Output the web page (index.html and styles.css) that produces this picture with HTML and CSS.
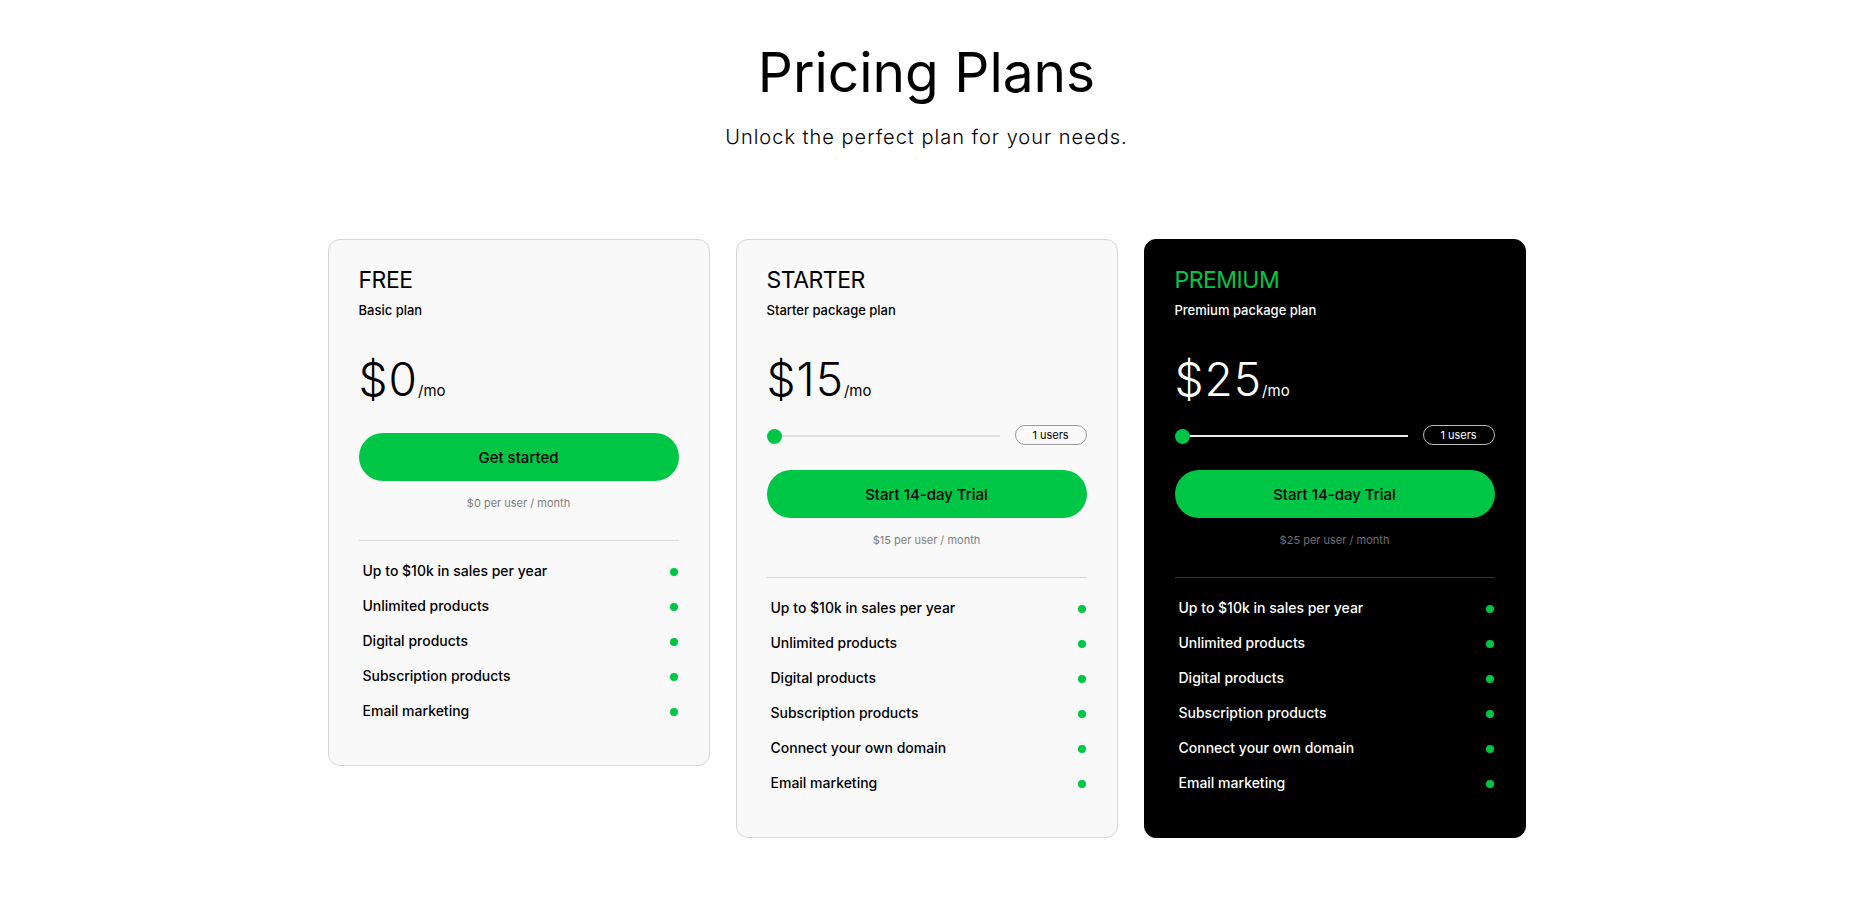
FILE: index.html
```html
<!DOCTYPE html>
<html lang="en">
<head>
<meta charset="utf-8">
<title>Pricing Plans</title>
<link rel="stylesheet" href="styles.css">
</head>
<body>
<main class="page">
  <header class="hero">
    <h1 class="hero-title">Pricing Plans</h1>
    <p class="hero-sub">Unlock the perfect plan for your needs.</p>
  </header>

  <section class="cards">
    <article class="card">
      <h2 class="plan-name">FREE</h2>
      <p class="plan-desc">Basic plan</p>
      <div class="price"><span class="amount">$0</span><span class="per">/mo</span></div>
      <button class="cta cta-free">Get started</button>
      <p class="note">$0 per user / month</p>
      <hr class="divider">
      <ul class="features">
        <li class="feature"><span>Up to $10k in sales per year</span><i class="dot"></i></li>
        <li class="feature"><span>Unlimited products</span><i class="dot"></i></li>
        <li class="feature"><span>Digital products</span><i class="dot"></i></li>
        <li class="feature"><span>Subscription products</span><i class="dot"></i></li>
        <li class="feature"><span>Email marketing</span><i class="dot"></i></li>
      </ul>
    </article>

    <article class="card">
      <h2 class="plan-name">STARTER</h2>
      <p class="plan-desc">Starter package plan</p>
      <div class="price"><span class="amount">$15</span><span class="per">/mo</span></div>
      <div class="slider-row">
        <div class="slider"><span class="thumb"></span><span class="track"></span></div>
        <span class="users">1 users</span>
      </div>
      <button class="cta">Start 14-day Trial</button>
      <p class="note">$15 per user / month</p>
      <hr class="divider">
      <ul class="features">
        <li class="feature"><span>Up to $10k in sales per year</span><i class="dot"></i></li>
        <li class="feature"><span>Unlimited products</span><i class="dot"></i></li>
        <li class="feature"><span>Digital products</span><i class="dot"></i></li>
        <li class="feature"><span>Subscription products</span><i class="dot"></i></li>
        <li class="feature"><span>Connect your own domain</span><i class="dot"></i></li>
        <li class="feature"><span>Email marketing</span><i class="dot"></i></li>
      </ul>
    </article>

    <article class="card card-dark">
      <h2 class="plan-name">PREMIUM</h2>
      <p class="plan-desc">Premium package plan</p>
      <div class="price"><span class="amount">$25</span><span class="per">/mo</span></div>
      <div class="slider-row">
        <div class="slider"><span class="thumb"></span><span class="track"></span></div>
        <span class="users">1 users</span>
      </div>
      <button class="cta">Start 14-day Trial</button>
      <p class="note">$25 per user / month</p>
      <hr class="divider">
      <ul class="features">
        <li class="feature"><span>Up to $10k in sales per year</span><i class="dot"></i></li>
        <li class="feature"><span>Unlimited products</span><i class="dot"></i></li>
        <li class="feature"><span>Digital products</span><i class="dot"></i></li>
        <li class="feature"><span>Subscription products</span><i class="dot"></i></li>
        <li class="feature"><span>Connect your own domain</span><i class="dot"></i></li>
        <li class="feature"><span>Email marketing</span><i class="dot"></i></li>
      </ul>
    </article>
  </section>
</main>
</body>
</html>
```

FILE: styles.css
```css
* { box-sizing: border-box; }

html, body {
  margin: 0;
  padding: 0;
  background: #ffffff;
  color: #000000;
  font-family: Inter, "Liberation Sans", sans-serif;
}

.page {
  width: 1864px;
  padding: 0 11px 0 0;
}

.hero {
  display: flex;
  flex-direction: column;
  align-items: center;
  padding-top: 45px;
}

.hero-title {
  margin: 0;
  font-size: 55px;
  line-height: 55px;
  font-weight: 400;
  letter-spacing: 0;
}

.hero-sub {
  margin: 25px 0 0;
  font-size: 20px;
  line-height: 24px;
  font-weight: 300;
  letter-spacing: 1px;
}

.cards {
  display: flex;
  justify-content: center;
  align-items: flex-start;
  gap: 26px;
  margin-top: 90px;
}

.card {
  width: 382px;
  background: #f9f9f9;
  border: 1px solid #d6d6d6;
  border-radius: 12px;
  padding: 28px 30px 37px;
  display: flex;
  flex-direction: column;
}

.card-dark {
  background: #000000;
  border-color: #000000;
  color: #ffffff;
}

.plan-name {
  margin: 0;
  font-size: 23px;
  line-height: 24px;
  font-weight: 400;
  letter-spacing: -0.5px;
}

.card-dark .plan-name { color: #00c646; }

.plan-desc {
  margin: 10px 0 0;
  font-size: 13px;
  line-height: 16px;
  font-weight: 500;
}

.price {
  margin-top: 39px;
  display: flex;
  align-items: baseline;
  height: 44px;
}

.amount {
  font-size: 46px;
  line-height: 44px;
  font-weight: 300;
  letter-spacing: 1px;
}

.per {
  font-size: 15px;
  font-weight: 400;
  margin-left: 0;
}

.slider-row {
  margin-top: 24px;
  height: 20px;
  display: flex;
  align-items: center;
  gap: 15px;
}

.slider {
  flex: 1;
  display: flex;
  align-items: center;
  margin-top: 2px;
}

.thumb {
  width: 15px;
  height: 15px;
  border-radius: 50%;
  background: #00c646;
  flex: none;
}

.track {
  flex: 1;
  height: 2px;
  background: #e3e3e3;
}

.card-dark .track { background: #ececec; }

.users {
  width: 72px;
  height: 20px;
  border: 1px solid #9a9a9a;
  border-radius: 10px;
  font-size: 11px;
  line-height: 18px;
  text-align: center;
  flex: none;
}

.card-dark .users { border-color: #bdbdbd; }

.cta {
  margin-top: 32px;
  height: 48px;
  border: none;
  border-radius: 24px;
  background: #00c646;
  color: #000000;
  font-family: inherit;
  font-size: 15px;
  font-weight: 500;
  cursor: pointer;
}

.slider-row + .cta { margin-top: 25px; }

.note {
  margin: 14px 0 0;
  font-size: 11px;
  line-height: 16px;
  text-align: center;
  color: #808080;
}

.card-dark .note { color: #6e6e6e; }

.divider {
  margin: 29px 0 0;
  border: none;
  height: 1px;
  background: #d9d9d9;
}

.card-dark .divider { background: #333333; }

.features {
  list-style: none;
  margin: 12px 0 0;
  padding: 0;
}

.feature {
  height: 35px;
  display: flex;
  align-items: center;
  justify-content: space-between;
  padding: 0 1px 0 4px;
  font-size: 14px;
  font-weight: 500;
}

.dot {
  width: 8px;
  height: 8px;
  border-radius: 50%;
  background: #00c646;
  margin-top: 2px;
}
```
